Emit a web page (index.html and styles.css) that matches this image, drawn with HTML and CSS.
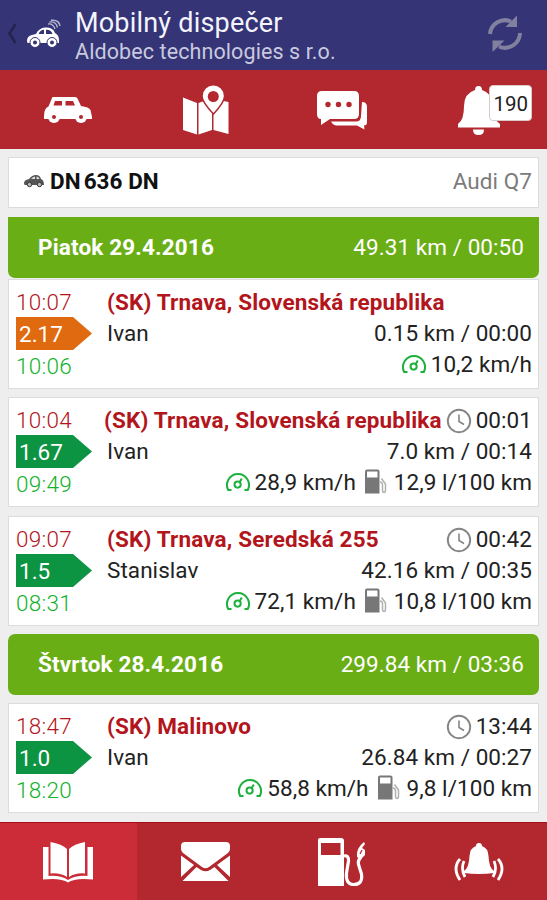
FILE: index.html
```html
<!DOCTYPE html>
<html lang="sk">
<head>
  <meta charset="UTF-8">
  <meta name="viewport" content="width=device-width, initial-scale=1.0">
  <link rel="stylesheet" href="styles.css">
  <title>Mobilný dispečer</title>
</head>
<body>
  <!-- shared icons -->
  <svg class="sprite" width="0" height="0">
    <symbol id="gauge" viewBox="0 0 26 22">
      <path d="M6.5 20H3.2A11 11 0 1 1 22.8 20H19.5" fill="none" stroke="#1cb13c" stroke-width="2"/>
      <circle cx="12.6" cy="14.6" r="3.1" fill="none" stroke="#1cb13c" stroke-width="2"/>
      <path d="M14.6 12.2L16.8 8.6" stroke="#1cb13c" stroke-width="2"/>
    </symbol>
    <symbol id="clock" viewBox="0 0 26 26">
      <circle cx="13" cy="13" r="11.2" fill="none" stroke="#858585" stroke-width="1.9"/>
      <path d="M13 6.5V13.5L18 16.5" fill="none" stroke="#858585" stroke-width="1.6"/>
    </symbol>
    <symbol id="pump" viewBox="0 0 23 25">
      <path d="M1 2.5Q1 .5 3 .5H13.5Q15.5 .5 15.5 2.5V24.5H1z" fill="#777"/>
      <path d="M3 2.5H13.5V8.500H3z" fill="#fff"/>
      <path d="M16 13Q18.500 13 18.500 16V21Q18.500 23.500 20 23.500T21.500 21V15L17.500 9.500" fill="none" stroke="#b0b0b0" stroke-width="1.5"/>
    </symbol>
  </svg>

  <header class="header">
    <svg class="header__back" width="10" height="24" viewBox="0 0 10 24"><path d="M8.500 2L2.500 11.500L8.500 21" fill="none" stroke="#24244f" stroke-width="2.600"/></svg>
    <svg class="header__logo" width="36" height="30" viewBox="0 0 36 30">
      <path d="M1 22Q1 17 6 16L10 15Q13 9 19 8.500Q27 8 29 14Q33 16 33 21V24H2Q1 24 1 22z" fill="#fff"/>
      <path d="M12.500 15Q14 11 18 10.800V15zM20 10.800Q25 10.500 26.500 15H20z" fill="#343477"/>
      <circle cx="9" cy="23.500" r="5" fill="#fff" stroke="#343477" stroke-width="1"/>
      <circle cx="26" cy="23.500" r="5" fill="#fff" stroke="#343477" stroke-width="1"/>
      <circle cx="9" cy="23.500" r="2" fill="#343477"/>
      <circle cx="26" cy="23.500" r="2" fill="#343477"/>
      <path d="M22 5Q27 4 29 10M23.500 3Q30 2 31.500 8.500M25 1.300Q33 .5 34 7" fill="none" stroke="#b9b9d2" stroke-width="1.400"/>
    </svg>
    <div class="header__titles">
      <h1 class="header__title">Mobilný dispečer</h1>
      <p class="header__subtitle">Aldobec technologies s r.o.</p>
    </div>
    <svg class="header__refresh" width="36" height="38" viewBox="0 0 36 38">
      <path d="M3 19A15 15 0 0 1 24 6.500M33 18A15 15 0 0 1 12 31.500" fill="none" stroke="#81819f" stroke-width="4"/>
      <path d="M30 .5V12H18.500zM5.500 37V25.500H17.500z" fill="#81819f"/>
    </svg>
  </header>

  <nav class="tabs">
    <a class="tabs__item">
      <svg width="50" height="28" viewBox="0 0 50 28">
        <path d="M9 2Q9 1 10 1H32Q34 1 34.500 2.500L38 10Q46 11 47.500 14L49 21V23H1V20Q1 12 5.500 10.500z" fill="#fff"/>
        <path d="M12 5H19V9.500H10.500zM22.500 5H30L32 9.500H22.500z" fill="#b3282f"/>
        <circle cx="11" cy="21" r="6" fill="#fff"/><circle cx="38" cy="21" r="6" fill="#fff"/>
        <circle cx="11" cy="21" r="2" fill="#b3282f"/><circle cx="38" cy="21" r="2" fill="#b3282f"/>
      </svg>
    </a>
    <a class="tabs__item tabs__item--map">
      <svg width="48" height="50" viewBox="0 0 48 50">
        <path d="M1 12.500L15 18V49.500L1 45zM16.500 18L30 13V45L16.500 49.500z" fill="#fff"/>
        <path d="M31.500 14L46.500 17V49L31.500 45z" fill="#fff"/>
        <path d="M31.500 29Q20 17 20 11A11.300 11.300 0 0 1 42.600 11Q42.600 17 31.500 29z" fill="#fff" stroke="#b3282f" stroke-width="1.500"/>
        <circle cx="31.300" cy="11.500" r="5.500" fill="#b3282f"/>
      </svg>
    </a>
    <a class="tabs__item">
      <svg width="52" height="40" viewBox="0 0 52 40">
        <path d="M46 12Q51 12 51 17V32Q51 35.500 48 35.500L48.500 39.500L41 35.500H21Q17 35.500 15 31.500H40Q45 31.500 45 26z" fill="#fff"/>
        <path d="M6 1H38Q43 1 43 6V24Q43 29 38 29H14L5 35V29Q1 29 1 24V6Q1 1 6 1z" fill="#fff"/>
        <circle cx="12" cy="14.500" r="2.700" fill="#b3282f"/><circle cx="22.500" cy="14.500" r="2.700" fill="#b3282f"/><circle cx="33" cy="14.500" r="2.700" fill="#b3282f"/>
      </svg>
    </a>
    <a class="tabs__item">
      <svg width="44" height="50" viewBox="0 0 44 50">
        <path d="M18 5Q18 1 21.500 1T25 5Q36 8.500 36 21Q36 35 43 39V42.500H1V39Q7 35 7 21Q7 8.500 18 5z" fill="#fff"/>
        <path d="M16 44.500H27Q27 50 21.500 50T16 44.500z" fill="#fff"/>
      </svg>
      <span class="tabs__badge">190</span>
    </a>
  </nav>

  <main class="content">
    <section class="card vehicle">
      <svg class="vehicle__icon" width="20" height="14" viewBox="0 0 20 14">
        <path d="M0 9Q0 6 5 5Q8 1 12 1T17 5Q20 6 20 11H1Q0 11 0 9z" fill="#555"/>
        <path d="M7 5Q9 2.500 11 2.500V5zM12.500 2.500Q15 2.500 15.500 5H12.500z" fill="#ddd"/>
        <circle cx="5.500" cy="10.500" r="2.200" fill="#bbb" stroke="#333"/><circle cx="15.500" cy="10.500" r="2.200" fill="#bbb" stroke="#333"/>
      </svg>
      <b class="vehicle__plate"><span class="vehicle__district">DN</span>636 DN</b>
      <span class="vehicle__model">Audi Q7</span>
    </section>

    <section class="day day--first">
      <b class="day__date">Piatok 29.4.2016</b>
      <span class="day__total">49.31 km / 00:50</span>
    </section>

    <article class="card trip trip--first">
      <div class="trip__times">
        <span class="trip__end">10:07</span>
        <span class="trip__grade trip__grade--orange">2.17</span>
        <span class="trip__start">10:06</span>
      </div>
      <div class="trip__info">
        <div class="trip__row"><b class="trip__place">(SK) Trnava, Slovenská republika</b></div>
        <div class="trip__row"><span>Ivan</span><span class="trip__right">0.15 km / 00:00</span></div>
        <div class="trip__row"><span class="trip__right"><svg class="gauge"><use href="#gauge"/></svg>10,2 km/h</span></div>
      </div>
    </article>

    <article class="card trip">
      <div class="trip__times">
        <span class="trip__end">10:04</span>
        <span class="trip__grade">1.67</span>
        <span class="trip__start">09:49</span>
      </div>
      <div class="trip__info">
        <div class="trip__row"><b class="trip__place trip__place--long">(SK) Trnava, Slovenská republika</b><span class="trip__right"><svg class="clock"><use href="#clock"/></svg>00:01</span></div>
        <div class="trip__row"><span>Ivan</span><span class="trip__right">7.0 km / 00:14</span></div>
        <div class="trip__row"><span class="trip__right"><svg class="gauge"><use href="#gauge"/></svg>28,9 km/h<svg class="pump"><use href="#pump"/></svg>12,9 l/100 km</span></div>
      </div>
    </article>

    <article class="card trip trip--spaced">
      <div class="trip__times">
        <span class="trip__end">09:07</span>
        <span class="trip__grade">1.5</span>
        <span class="trip__start">08:31</span>
      </div>
      <div class="trip__info">
        <div class="trip__row"><b class="trip__place">(SK) Trnava, Seredská 255</b><span class="trip__right"><svg class="clock"><use href="#clock"/></svg>00:42</span></div>
        <div class="trip__row"><span>Stanislav</span><span class="trip__right">42.16 km / 00:35</span></div>
        <div class="trip__row"><span class="trip__right"><svg class="gauge"><use href="#gauge"/></svg>72,1 km/h<svg class="pump"><use href="#pump"/></svg>10,8 l/100 km</span></div>
      </div>
    </article>

    <section class="day">
      <b class="day__date">Štvrtok 28.4.2016</b>
      <span class="day__total">299.84 km / 03:36</span>
    </section>

    <article class="card trip">
      <div class="trip__times">
        <span class="trip__end">18:47</span>
        <span class="trip__grade">1.0</span>
        <span class="trip__start">18:20</span>
      </div>
      <div class="trip__info">
        <div class="trip__row"><b class="trip__place">(SK) Malinovo</b><span class="trip__right"><svg class="clock"><use href="#clock"/></svg>13:44</span></div>
        <div class="trip__row"><span>Ivan</span><span class="trip__right">26.84 km / 00:27</span></div>
        <div class="trip__row"><span class="trip__right"><svg class="gauge"><use href="#gauge"/></svg>58,8 km/h<svg class="pump"><use href="#pump"/></svg>9,8 l/100 km</span></div>
      </div>
    </article>
  </main>

  <footer class="tabs tabs--bottom">
    <a class="tabs__item tabs__item--active">
      <svg width="50" height="42" viewBox="0 0 50 42">
        <path d="M0 6H5.500V35Q17 34 25 39Q33 34 44.500 35V6H50V38.500Q32 36.500 25 41.500Q18 36.500 0 38.500z" fill="#fff"/>
        <path d="M7.500 1Q19 3 24 8V36Q17 31.500 7.500 32.500zM42 1Q31 3 26 8V36Q33 31.500 42 32.500z" fill="#fff"/>
      </svg>
    </a>
    <a class="tabs__item">
      <svg width="51" height="40" viewBox="0 0 51 40">
        <path d="M5 0H46Q50 0 50 4V7Q50 9 48 11L29 25Q25.500 27.500 22 25L3 11Q1 9 1 7V4Q1 0 5 0z" fill="#fff"/>
        <path d="M1 13.500L14 23L1 35zM50 13.500L37 23L50 35zM16.500 25L21 28Q25.500 30.500 30 28L34.500 25L48.500 39H2.500z" fill="#fff"/>
      </svg>
    </a>
    <a class="tabs__item">
      <svg width="49" height="50" viewBox="0 0 49 50">
        <path d="M3 1H24Q27 1 27 4V49H1V3Q1 1 3 1z" fill="#fff"/>
        <path d="M4 6H23.500V18H4z" fill="#b3282f"/>
        <path d="M27 19Q32 18 31.500 24L29.500 36Q28.500 47 36 47.500Q46 48 44.500 37L42 29Q40 24 44 20" fill="none" stroke="#fff" stroke-width="3.200"/>
        <path d="M40 20Q39 11 47 5L48 7L45 11L48 13V18L44 22z" fill="#fff"/>
        <path d="M43 17L45 13" stroke="#b3282f" stroke-width="1.200"/>
      </svg>
    </a>
    <a class="tabs__item">
      <svg width="50" height="38" viewBox="0 0 50 38">
        <path d="M22 3Q22 0 25 0T28 3Q34 5 34.500 13Q35 25 40 28V30Q25 32 10 30V28Q15 25 15.500 13Q16 5 22 3z" fill="#fff"/>
        <path d="M10 18Q6.500 26 11 34M6 16Q-2 25 6 37M40 18Q43.500 26 39 34M44 16Q52 25 44 37" fill="none" stroke="#fff" stroke-width="2.800"/>
      </svg>
    </a>
  </footer>
</body>
</html>
```
FILE: styles.css
```css
* {
  box-sizing: border-box;
}

body {
  margin: 0;
  width: 547px;
  height: 900px;
  display: flex;
  flex-direction: column;
  overflow: hidden;
  background: #eee;
  color: #222;
  font-family: Roboto, sans-serif;
  font-size: 22.5px;
  line-height: 31px;
  letter-spacing: .06px;
}

h1, p {
  margin: 0;
}

svg {
  flex: none;
  display: block;
}

.sprite {
  position: absolute;
}

/* header */
.header {
  display: flex;
  height: 70px;
  background: #343477;
  padding-left: 7px;
}

.header__back {
  margin-top: 22px;
}

.header__logo {
  margin: 19px 0 0 9px;
}

.header__titles {
  margin-left: 13px;
}

.header__title {
  margin-top: 7px;
  color: #f4f4fb;
  font-size: 27px;
  font-weight: 400;
  line-height: 32px;
  letter-spacing: .2px;
}

.header__subtitle {
  color: #c9c9de;
  font-size: 21.5px;
  line-height: 25px;
  letter-spacing: .1px;
}

.header__refresh {
  margin: 15px 24px 0 auto;
}

/* tab bars */
.tabs {
  display: grid;
  grid-template-columns: repeat(4, 1fr);
  height: 79px;
  flex: none;
  background: #b3282f;
}

.tabs__item {
  position: relative;
  display: flex;
  align-items: center;
  justify-content: center;
}

.tabs__item--map {
  padding-left: 2px;
}

.tabs__badge {
  position: absolute;
  left: 79px;
  top: 15px;
  width: 43px;
  height: 36px;
  border: 1px solid #d9c9c9;
  border-radius: 4px;
  background: #fff;
  font-size: 20.5px;
  line-height: 36px;
  text-align: center;
}

.tabs--bottom {
  height: 78px;
  border-top: 1px solid #a80d18;
}

.tabs__item--active {
  background: #cb2c37;
}

/* list */
.content {
  flex: 1;
  padding: 8px 8px 0;
}

.card {
  background: #fff;
  border: 1px solid #dcdcdc;
}

.vehicle {
  display: flex;
  align-items: center;
  height: 51px;
  padding: 0 6px 3px 15px;
}

.vehicle__plate {
  margin-left: 6px;
  color: #111;
}

.vehicle__district {
  margin-right: 3px;
}

.vehicle__model {
  margin-left: auto;
  color: #7b7b7b;
}

.day {
  display: flex;
  justify-content: space-between;
  align-items: center;
  height: 61px;
  margin-top: 8px;
  padding: 0 15px 0 30px;
  border-radius: 7px;
  background: #6aae16;
  color: #fff;
}

.day--first {
  margin-top: 9px;
  border-radius: 0 0 7px 7px;
}

.day__date {
  letter-spacing: .15px;
}

.trip {
  display: flex;
  height: 110px;
  margin-top: 8px;
  padding: 7px 6px 0 7px;
}

.trip--first {
  margin-top: 1px;
}

.trip--spaced {
  margin-top: 9px;
}

.trip__times {
  display: flex;
  flex-direction: column;
  width: 91px;
  font-weight: 300;
  letter-spacing: .3px;
}

.trip__end {
  height: 30px;
  color: #b3151c;
}

.trip__grade {
  width: 76px;
  height: 33px;
  padding-left: 3px;
  background: #0d9443;
  clip-path: polygon(0 0, 57px 0, 100% 50%, 57px 100%, 0 100%);
  color: #fff;
  font-weight: 400;
  line-height: 34px;
  letter-spacing: 0;
}

.trip__grade--orange {
  background: #e06a10;
}

.trip__start {
  color: #12b22c;
  line-height: 33px;
}

.trip__info {
  flex: 1;
}

.trip__row {
  display: flex;
  height: 31px;
}

.trip__place {
  color: #b3151c;
  letter-spacing: .15px;
  white-space: nowrap;
}

.trip__place--long {
  margin-left: -3px;
}

.trip__right {
  display: flex;
  align-items: center;
  margin-left: auto;
  white-space: nowrap;
}

.gauge {
  width: 26px;
  height: 22px;
  margin: 0 4px 4px 0;
}

.clock {
  width: 26px;
  height: 26px;
  margin-right: 4px;
}

.pump {
  width: 23px;
  height: 25px;
  margin: 0 7px 2px 8px;
}
```
